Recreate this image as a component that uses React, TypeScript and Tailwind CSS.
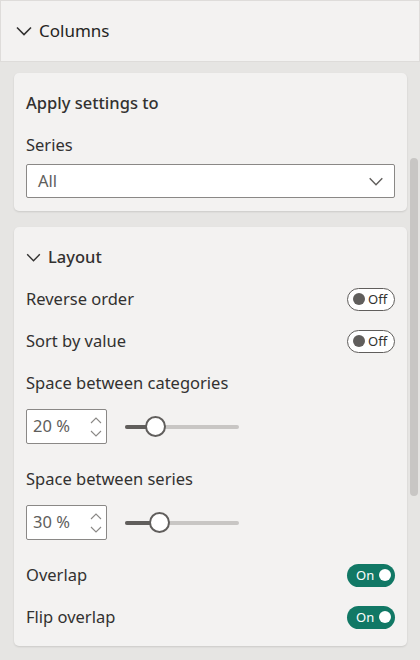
import React from 'react';

const Chevron = ({ className }: { className?: string }) => (
    <svg viewBox="0 0 16 10" className={className} fill="none" stroke="currentColor" strokeWidth="1.6">
        <path d="M1 1.5 L8 8.5 L15 1.5" />
    </svg>
);

const Toggle = ({ on }: { on: boolean }) =>
    on ? (
        <div className="w-[48px] h-[23px] rounded-full bg-[#117865] flex items-center justify-between pl-[9px] pr-[4px]">
            <span className="text-[13px] text-white leading-none">On</span>
            <span className="w-[12px] h-[12px] rounded-full bg-white" />
        </div>
    ) : (
        <div className="w-[48px] h-[23px] rounded-full border border-[#605e5c] bg-white flex items-center gap-[3px] pl-[5px]">
            <span className="w-[12px] h-[12px] rounded-full bg-[#605e5c]" />
            <span className="text-[13px] text-[#323130] leading-none">Off</span>
        </div>
    );

const SpinInput = ({ value }: { value: string }) => (
    <div className="w-[81px] h-[35px] bg-white border border-[#8a8886] rounded-[2px] flex items-center justify-between pl-[6px] pr-[4px]">
        <span className="text-[16.5px] text-[#605e5c]">{value}</span>
        <div className="flex flex-col gap-[6px] text-[#8a8886]">
            <svg viewBox="0 0 12 7" className="w-[12px] h-[7px]" fill="none" stroke="currentColor" strokeWidth="1.1">
                <path d="M1 6 L6 1 L11 6" />
            </svg>
            <svg viewBox="0 0 12 7" className="w-[12px] h-[7px]" fill="none" stroke="currentColor" strokeWidth="1.1">
                <path d="M1 1 L6 6 L11 1" />
            </svg>
        </div>
    </div>
);

const Slider = ({ pos }: { pos: number }) => (
    <div className="relative w-[114px] h-[20px] flex items-center ml-[18px]">
        <div className="w-full h-[4px] rounded-full bg-[#c8c6c4]" />
        <div className="absolute left-0 h-[4px] rounded-full bg-[#605e5c]" style={{ width: pos }} />
        <div
            className="absolute w-[21px] h-[21px] rounded-full bg-white border-2 border-[#605e5c]"
            style={{ left: pos - 10.5 }}
        />
    </div>
);

const Row = ({ label, children }: { label: string; children?: React.ReactNode }) => (
    <div className="h-[42px] flex items-center justify-between">
        <span className="text-[16.5px] text-[#323130]">{label}</span>
        {children}
    </div>
);

export default function App() {
    return (
        <div className="w-[420px] h-[660px] bg-[#e6e5e3] flex flex-col overflow-hidden font-['Noto_Sans',sans-serif] text-[#252423]">
            <div className="h-[62px] shrink-0 bg-[#f3f2f1] border border-[#dedcda] flex items-center gap-[7px] pl-[15px]">
                <Chevron className="w-[16px] h-[10px] text-[#323130]" />
                <span className="text-[17px] text-[#252423]">Columns</span>
            </div>

            <div className="flex flex-1 min-h-0">
                <div className="flex-1 pl-[14px] pt-[11px] flex flex-col gap-[16px]">
                    <div className="bg-[#f3f2f1] rounded-[5px] shadow-[0_1px_2px_rgba(0,0,0,0.12)] px-[12px] pt-[19px] pb-[13px]">
                        <div className="text-[16.5px] font-medium text-[#323130] leading-[22px]">Apply settings to</div>
                        <div className="text-[16.5px] text-[#323130] leading-[22px] mt-[20px]">Series</div>
                        <div className="mt-[8px] h-[34px] bg-white border border-[#8a8886] rounded-[2px] flex items-center justify-between pl-[11px] pr-[10px]">
                            <span className="text-[16.5px] text-[#605e5c]">All</span>
                            <Chevron className="w-[16px] h-[9px] text-[#605e5c]" />
                        </div>
                    </div>

                    <div className="bg-[#f3f2f1] rounded-[5px] shadow-[0_1px_2px_rgba(0,0,0,0.12)] px-[12px] pt-[9px] pb-[8px]">
                        <div className="h-[42px] flex items-center gap-[7px]">
                            <Chevron className="w-[15px] h-[9px] text-[#323130]" />
                            <span className="text-[16.5px] font-medium text-[#323130]">Layout</span>
                        </div>
                        <Row label="Reverse order">
                            <Toggle on={false} />
                        </Row>
                        <Row label="Sort by value">
                            <Toggle on={false} />
                        </Row>
                        <Row label="Space between categories" />
                        <div className="flex items-center mt-[5px] mb-[14px]">
                            <SpinInput value="20 %" />
                            <Slider pos={30} />
                        </div>
                        <Row label="Space between series" />
                        <div className="flex items-center mt-[5px] mb-[14px]">
                            <SpinInput value="30 %" />
                            <Slider pos={34} />
                        </div>
                        <Row label="Overlap">
                            <Toggle on />
                        </Row>
                        <Row label="Flip overlap">
                            <Toggle on />
                        </Row>
                    </div>
                </div>

                <div className="w-[13px] shrink-0 pl-[3px] pt-[96px]">
                    <div className="w-[8px] h-[338px] rounded-full bg-[#c8c6c4]" />
                </div>
            </div>
        </div>
    );
}
